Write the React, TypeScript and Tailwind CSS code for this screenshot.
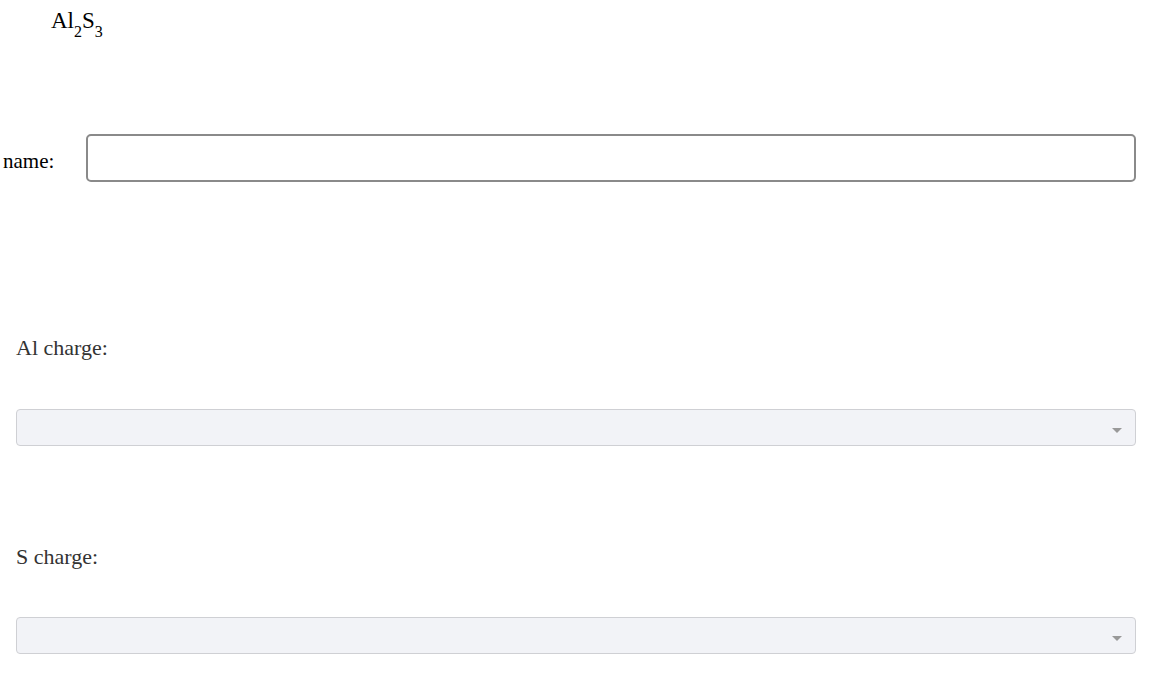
export default function App() {
  return (
    <div className="min-h-screen bg-white text-black" style={{ fontFamily: '"Liberation Serif", serif' }}>
      <div className="pl-[51px] pt-[7px] text-[23px] leading-[28px]">
        Al<sub className="text-[16px] align-[-5px]">2</sub>S<sub className="text-[16px] align-[-5px]">3</sub>
      </div>

      <div className="flex items-center mt-[99px] pl-[3px] pr-[21px]">
        <label className="text-[21px] w-[83px] pt-[7px]">name:</label>
        <input
          type="text"
          className="flex-1 h-[48px] border-2 border-[#8a8a8a] rounded-[5px] outline-none px-2"
        />
      </div>

      <div className="pl-[16px] pr-[21px]">
        <div className="mt-[153px] text-[22px] text-[#333] leading-[26px]">Al charge:</div>
        <div className="mt-[48px] h-[37px] bg-[#f2f3f7] border border-[#cfd0d4] rounded-[4px] flex items-center justify-end pr-[13px]">
          <span className="w-0 h-0 border-l-[5px] border-r-[5px] border-t-[5px] border-l-transparent border-r-transparent border-t-[#999] mt-[6px]" />
        </div>

        <div className="mt-[98px] text-[22px] text-[#333] leading-[26px]">S charge:</div>
        <div className="mt-[47px] h-[37px] bg-[#f2f3f7] border border-[#cfd0d4] rounded-[4px] flex items-center justify-end pr-[13px]">
          <span className="w-0 h-0 border-l-[5px] border-r-[5px] border-t-[5px] border-l-transparent border-r-transparent border-t-[#999] mt-[6px]" />
        </div>
      </div>
    </div>
  );
}
